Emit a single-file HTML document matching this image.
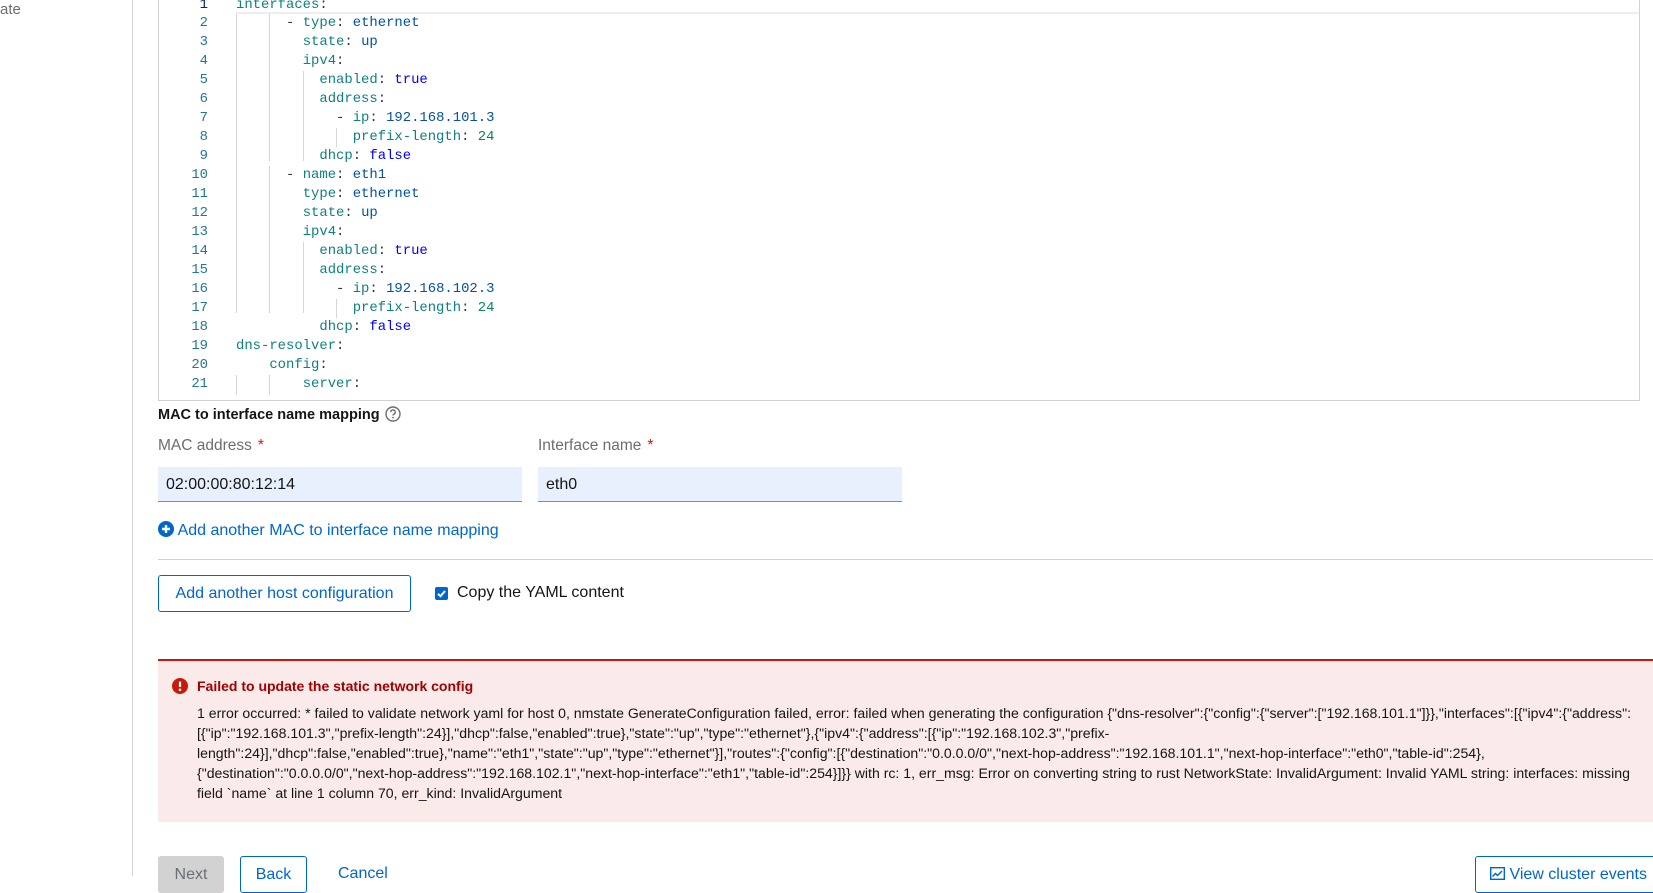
<!DOCTYPE html>
<html><head><meta charset="utf-8"><style>
*{box-sizing:border-box;margin:0;padding:0}
body{width:1653px;height:876px;overflow:hidden;background:#fff;font-family:"Liberation Sans",sans-serif;position:relative;color:#151515}
.abs{position:absolute}
.side{left:0;top:0;width:133px;height:876px;border-right:1px solid #d2d2d2}
.code{font-family:"Liberation Mono",monospace;font-size:13.9px;white-space:pre;line-height:18.95px}
.ln{position:absolute;left:158px;width:50px;text-align:right;color:#237893}
.k{color:#0f8080}.s{color:#0451a5}.b{color:#0000ff}.n{color:#098658}.p{color:#333}
.g{position:absolute;width:1px;background:#d6d6d6}
.lbl{font-size:15.5px;color:#6a6e73}
.req{color:#c9190b;margin-left:6px}
.inp{background:#e8f0fe;border-bottom:1px solid #8a8d90;font-size:16px;padding:9px 0 0 8px;height:35px}
.btn{border:1px solid #0066cc;border-radius:3px;color:#0066cc;font-size:16px;text-align:center}
.al{font-size:14.1px;color:#151515;line-height:20px;white-space:nowrap}
</style></head><body>
<div class="abs side"><div class="abs" style="left:0;top:1px;font-size:15px;color:#6a6e73">ate</div></div>

<div class="abs" style="left:158px;top:-2px;width:1482px;height:403px;border:1px solid #d2d2d2;border-top:none"></div>
<div class="abs" style="left:236px;top:12px;width:1403px;height:2px;background:#eeeeee"></div>
<div class="abs" style="left:1639px;top:0;width:1px;height:400px;background:#d2d2d2"></div>
<div class="g" style="left:269px;top:14px;height:147px"></div>
<div class="g" style="left:269px;top:166px;height:147px"></div>
<div class="g" style="left:303px;top:71px;height:90px"></div>
<div class="g" style="left:303px;top:242px;height:71px"></div>
<div class="g" style="left:336px;top:128px;height:19px"></div>
<div class="g" style="left:336px;top:299px;height:19px"></div>
<div class="g" style="left:236px;top:14px;height:299px"></div>
<div class="g" style="left:236px;top:375px;height:20px"></div>
<div class="g" style="left:269px;top:375px;height:20px"></div>
<div class="abs code" style="left:0;top:-4.5px;width:100%">
<div class="ln" style="top:0;color:#0b216f">1</div><div class="ln" style="top:18.95px">2</div><div class="ln" style="top:37.9px">3</div><div class="ln" style="top:56.85px">4</div><div class="ln" style="top:75.8px">5</div><div class="ln" style="top:94.75px">6</div><div class="ln" style="top:113.7px">7</div><div class="ln" style="top:132.65px">8</div><div class="ln" style="top:151.6px">9</div><div class="ln" style="top:170.55px">10</div><div class="ln" style="top:189.5px">11</div><div class="ln" style="top:208.45px">12</div><div class="ln" style="top:227.4px">13</div><div class="ln" style="top:246.35px">14</div><div class="ln" style="top:265.3px">15</div><div class="ln" style="top:284.25px">16</div><div class="ln" style="top:303.2px">17</div><div class="ln" style="top:322.15px">18</div><div class="ln" style="top:341.1px">19</div><div class="ln" style="top:360.05px">20</div><div class="ln" style="top:379px">21</div>
<div class="abs" style="left:236px;top:0"><span class="k">interfaces</span><span class="p">:</span>
      <span class="p">-</span> <span class="k">type</span><span class="p">:</span> <span class="s">ethernet</span>
        <span class="k">state</span><span class="p">:</span> <span class="s">up</span>
        <span class="k">ipv4</span><span class="p">:</span>
          <span class="k">enabled</span><span class="p">:</span> <span class="b">true</span>
          <span class="k">address</span><span class="p">:</span>
            <span class="p">-</span> <span class="k">ip</span><span class="p">:</span> <span class="s">192.168.101.3</span>
              <span class="k">prefix-length</span><span class="p">:</span> <span class="n">24</span>
          <span class="k">dhcp</span><span class="p">:</span> <span class="b">false</span>
      <span class="p">-</span> <span class="k">name</span><span class="p">:</span> <span class="s">eth1</span>
        <span class="k">type</span><span class="p">:</span> <span class="s">ethernet</span>
        <span class="k">state</span><span class="p">:</span> <span class="s">up</span>
        <span class="k">ipv4</span><span class="p">:</span>
          <span class="k">enabled</span><span class="p">:</span> <span class="b">true</span>
          <span class="k">address</span><span class="p">:</span>
            <span class="p">-</span> <span class="k">ip</span><span class="p">:</span> <span class="s">192.168.102.3</span>
              <span class="k">prefix-length</span><span class="p">:</span> <span class="n">24</span>
          <span class="k">dhcp</span><span class="p">:</span> <span class="b">false</span>
<span class="k">dns-resolver</span><span class="p">:</span>
    <span class="k">config</span><span class="p">:</span>
        <span class="k">server</span><span class="p">:</span></div>
</div>

<div class="abs" style="left:158px;top:406px;font-size:14.5px;font-weight:bold">MAC to interface name mapping
<svg width="16" height="16" viewBox="0 0 16 16" style="vertical-align:-3px;margin-left:1px"><circle cx="8" cy="8" r="7" fill="none" stroke="#6a6e73" stroke-width="1.4"/><path d="M5.8 6.2a2.2 2.2 0 1 1 3 2c-.6.3-.8.6-.8 1.3" fill="none" stroke="#6a6e73" stroke-width="1.4"/><circle cx="8" cy="11.6" r=".9" fill="#6a6e73"/></svg></div>
<div class="abs lbl" style="left:158px;top:437px">MAC address<span class="req">*</span></div>
<div class="abs lbl" style="left:538px;top:437px">Interface name<span class="req">*</span></div>
<div class="abs inp" style="left:158px;top:467px;width:364px">02:00:00:80:12:14</div>
<div class="abs inp" style="left:538px;top:467px;width:364px">eth0</div>
<div class="abs" style="left:158px;top:521px;font-size:16px;color:#0066cc;white-space:nowrap"><svg width="16" height="16" viewBox="0 0 16 16" style="vertical-align:-2px"><circle cx="8" cy="8" r="8" fill="#0066cc"/><path d="M8 4v8M4 8h8" stroke="#fff" stroke-width="2.4"/></svg> Add another MAC to interface name mapping</div>
<div class="abs" style="left:158px;top:559px;width:1495px;height:1px;background:#d2d2d2"></div>
<div class="abs btn" style="left:158px;top:575px;width:253px;height:37px;line-height:35px">Add another host configuration</div>
<div class="abs" style="left:435px;top:587px;width:13px;height:13px;background:#0066cc;border-radius:2px"><svg width="13" height="13" viewBox="0 0 13 13" class="abs" style="left:0;top:0"><path d="M3 6.8l2.5 2.4L10 4" fill="none" stroke="#fff" stroke-width="2"/></svg></div>
<div class="abs" style="left:457px;top:584px;font-size:16px">Copy the YAML content</div>

<div class="abs" style="left:158px;top:659px;width:1495px;height:163px;background:#faeaea;border-top:2px solid #c9190b"></div>
<svg class="abs" style="left:172px;top:678px" width="16" height="16" viewBox="0 0 16 16"><circle cx="8" cy="8" r="8" fill="#c9190b"/><path d="M8 3.6v5.4" stroke="#fff" stroke-width="2.2"/><circle cx="8" cy="11.8" r="1.3" fill="#fff"/></svg>
<div class="abs" style="left:197px;top:678px;font-size:14px;font-weight:bold;color:#a30000">Failed to update the static network config</div>
<div class="abs al" style="left:197px;top:703px">1 error occurred: * failed to validate network yaml for host 0, nmstate GenerateConfiguration failed, error: failed when generating the configuration {"dns-resolver":{"config":{"server":["192.168.101.1"]}},"interfaces":[{"ipv4":{"address":<br>[{"ip":"192.168.101.3","prefix-length":24}],"dhcp":false,"enabled":true},"state":"up","type":"ethernet"},{"ipv4":{"address":[{"ip":"192.168.102.3","prefix-<br>length":24}],"dhcp":false,"enabled":true},"name":"eth1","state":"up","type":"ethernet"}],"routes":{"config":[{"destination":"0.0.0.0/0","next-hop-address":"192.168.101.1","next-hop-interface":"eth0","table-id":254},<br>{"destination":"0.0.0.0/0","next-hop-address":"192.168.102.1","next-hop-interface":"eth1","table-id":254}]}} with rc: 1, err_msg: Error on converting string to rust NetworkState: InvalidArgument: Invalid YAML string: interfaces: missing<br>field `name` at line 1 column 70, err_kind: InvalidArgument</div>

<div class="abs" style="left:158px;top:856px;width:66px;height:37px;background:#d2d2d2;border-radius:3px;color:#6a6e73;font-size:16px;text-align:center;line-height:37px">Next</div>
<div class="abs btn" style="left:240px;top:856px;width:67px;height:37px;line-height:35px">Back</div>
<div class="abs" style="left:338px;top:865px;font-size:16px;color:#0066cc">Cancel</div>
<div class="abs btn" style="left:1475px;top:856px;width:190px;height:37px;line-height:35px;text-align:left;padding-left:14px;white-space:nowrap"><svg width="15" height="13" viewBox="0 0 15 13" style="vertical-align:-1px"><rect x="0.7" y="0.7" width="13.6" height="11.6" fill="none" stroke="#0066cc" stroke-width="1.4"/><path d="M2.5 9.5l3-3 2 2 4.5-4.5" fill="none" stroke="#0066cc" stroke-width="1.5"/></svg> View cluster events</div>
</body></html>
